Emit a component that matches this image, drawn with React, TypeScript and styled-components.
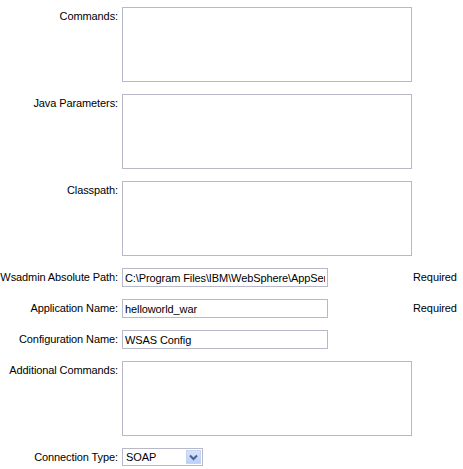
import React from "react";
import styled, { createGlobalStyle } from "styled-components";

const Global = createGlobalStyle`
  html, body { margin: 0; padding: 0; background: #ffffff; }
  body { font-family: "Liberation Sans", Arial, sans-serif; font-size: 11px; letter-spacing: -0.1px; color: #000; }
`;

const Form = styled.div`
  display: grid;
  grid-template-columns: 122px 291px auto;
  row-gap: 12px;
  padding-top: 7px;
  align-items: start;
`;

const Label = styled.label<{ $h: number }>`
  text-align: right;
  padding-right: 4px;
  line-height: ${(p) => p.$h}px;
  white-space: nowrap;
`;

const Field = styled.div`
  display: flex;
`;

const Area = styled.textarea`
  box-sizing: border-box;
  width: 290px;
  height: 75px;
  border: 1px solid #b7b9c9;
  resize: none;
  margin: 0;
  padding: 2px;
  font: inherit;
  outline: none;
`;

const Input = styled.input`
  box-sizing: border-box;
  width: 206px;
  height: 19px;
  border: 1px solid #b7b9c9;
  margin: 0;
  padding: 0 2px;
  font: inherit;
  letter-spacing: inherit;
  color: #000;
  outline: none;
`;

const Note = styled.span`
  line-height: 19px;
  white-space: nowrap;
`;

const SelectBox = styled.div`
  box-sizing: border-box;
  width: 81px;
  height: 18px;
  border: 1px solid #b7b9c9;
  display: flex;
  align-items: stretch;
  padding: 1px;
`;

const SelectValue = styled.span`
  flex: 1;
  line-height: 14px;
  padding-left: 2px;
`;

const SelectButton = styled.span`
  width: 15px;
  display: flex;
  align-items: center;
  justify-content: center;
  background: linear-gradient(#d6e2fd, #bccffb);
  border: 1px solid #c5d3f5;
  box-sizing: border-box;
`;

const Empty = styled.span``;

const areaRows = ["Commands:", "Java Parameters:", "Classpath:"];

export default function App() {
  return (
    <>
      <Global />
      <Form>
        {areaRows.map((l) => (
          <React.Fragment key={l}>
            <Label $h={19}>{l}</Label>
            <Field>
              <Area />
            </Field>
            <Empty />
          </React.Fragment>
        ))}
        <Label $h={19}>Wsadmin Absolute Path:</Label>
        <Field>
          <Input defaultValue="C:\Program Files\IBM\WebSphere\AppServer\bin\wsadmin.bat" />
        </Field>
        <Note>Required</Note>

        <Label $h={19}>Application Name:</Label>
        <Field>
          <Input defaultValue="helloworld_war" />
        </Field>
        <Note>Required</Note>

        <Label $h={19}>Configuration Name:</Label>
        <Field>
          <Input defaultValue="WSAS Config" />
        </Field>
        <Empty />

        <Label $h={19}>Additional Commands:</Label>
        <Field>
          <Area />
        </Field>
        <Empty />

        <Label $h={18}>Connection Type:</Label>
        <Field>
          <SelectBox>
            <SelectValue>SOAP</SelectValue>
            <SelectButton>
              <svg width="9" height="7" viewBox="0 0 9 7">
                <path d="M1 1.5 L4.5 5 L8 1.5" fill="none" stroke="#4d6185" strokeWidth="2" />
              </svg>
            </SelectButton>
          </SelectBox>
        </Field>
        <Empty />
      </Form>
    </>
  );
}
